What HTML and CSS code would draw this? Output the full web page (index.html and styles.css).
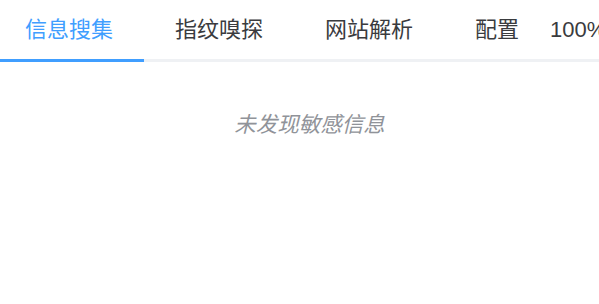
FILE: index.html
```html
<!DOCTYPE html>
<html>
<head>
    <title>信息搜集</title>
    <meta charset="UTF-8">
    <link rel="stylesheet" href="styles.css">
</head>
<body>
    <div class="tabs">
        <div class="tabs-nav">
            <div class="tab-item active">信息搜集</div>
            <div class="tab-item">指纹嗅探</div>
            <div class="tab-item">网站解析</div>
            <div class="tab-item last">配置</div>
            <div class="zoom-level">100%</div>
        </div>
        <div class="tabs-content">
            <div class="empty-text">未发现敏感信息</div>
        </div>
    </div>
</body>
</html>
```

FILE: styles.css
```css
/* Estilos */
body {
    margin: 0;
    font-family: "Liberation Sans", "Noto Sans CJK SC", sans-serif;
    background-color: #fff;
    overflow: hidden;
}
.tabs-nav {
    display: flex;
    height: 59px;
    border-bottom: 3px solid #EFF1F4;
    white-space: nowrap;
}
.tab-item {
    position: relative;
    padding: 0 37px 0 25px;
    line-height: 59px;
    font-size: 22px;
    color: #3a3b3e;
}
.tab-item.last {
    padding-right: 31px;
}
.tab-item.active {
    color: #409EFF;
}
.tab-item.active::after {
    content: "";
    position: absolute;
    left: 0;
    bottom: -3px;
    width: 144px;
    height: 3px;
    background-color: #409EFF;
}
.zoom-level {
    line-height: 59px;
    font-size: 22px;
    color: #3a3b3e;
}
.tabs-content {
    padding: 48px 0 0 20px;
}
.empty-text {
    text-align: center;
    font-size: 21.5px;
    line-height: 30px;
    font-style: italic;
    color: #909399;
}
```
